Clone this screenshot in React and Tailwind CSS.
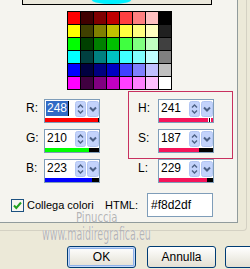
import React from 'react';

const palette = [
  ['#ff0000', '#400000', '#800000', '#c00000', '#ff4040', '#ff8080', '#ffc0c0', '#000000'],
  ['#ffff00', '#404000', '#808000', '#c0c000', '#ffff40', '#ffff80', '#ffffc0', '#202020'],
  ['#00ff00', '#004000', '#008000', '#00c000', '#40ff40', '#80ff80', '#c0ffc0', '#404040'],
  ['#00ffff', '#004040', '#008080', '#00c0c0', '#40ffff', '#80ffff', '#c0ffff', '#808080'],
  ['#0000ff', '#000040', '#000080', '#0000c0', '#4040ff', '#8080ff', '#c0c0ff', '#c0c0c0'],
  ['#ff00ff', '#400040', '#800080', '#c000c0', '#ff40ff', '#ff80ff', '#ffc0ff', '#ffffff'],
];

const SpinButton = () => (
  <svg width="11" height="16" viewBox="0 0 11 16">
    <rect x="0.5" y="0.5" width="10" height="15" rx="2" fill="#c3d3fb" stroke="#b2c5f2" />
    <path d="M3 6.5 L5.5 4 L8 6.5" fill="none" stroke="#4d6185" strokeWidth="1.4" />
    <path d="M3 9.5 L5.5 12 L8 9.5" fill="none" stroke="#4d6185" strokeWidth="1.4" />
  </svg>
);

const DropButton = () => (
  <svg width="12" height="16" viewBox="0 0 12 16">
    <rect x="0.5" y="0.5" width="11" height="15" rx="2" fill="#c3d3fb" stroke="#b2c5f2" />
    <path d="M3 6.5 L6 9.5 L9 6.5" fill="none" stroke="#4d6185" strokeWidth="2" />
  </svg>
);

// campo numerico con spin, tendina e barra colorata sotto
const Field = ({ value, selected, barClass, marker }) => (
  <div className="w-[56px] h-[24px] border border-[#7f9db9] bg-white flex flex-col">
    <div className="flex h-[18px] pt-[1px]">
      <div className="w-[30px] pl-[1px] flex items-start">
        {selected ? (
          <span className="bg-[#316ac5] text-white leading-[15px] h-[15px] px-[1px] border-r border-black">{value}</span>
        ) : (
          <span className="leading-[15px] px-[1px]">{value}</span>
        )}
      </div>
      <SpinButton />
      <div className="w-[1px]" />
      <DropButton />
    </div>
    <div className="h-[4px] flex bg-black">
      {marker ? (
        <>
          <div className={`flex-1 ${barClass}`} />
          <div className="w-[1px] bg-white" />
          <div className="w-[1px] bg-black" />
          <div className="w-[1px] bg-white" />
          <div className={`w-[2px] ${barClass}`} />
        </>
      ) : (
        <div className={barClass} style={{ width: `${(value / 255) * 100}%` }} />
      )}
    </div>
  </div>
);

const Row = ({ label, labelWidth, children }) => (
  <div className="flex items-start">
    <div className={`${labelWidth} h-[18px] flex items-center`}>{label}</div>
    {children}
  </div>
);

const App = () => {
  return (
    <div className="w-[250px] h-[269px] bg-[#ece9d8] overflow-hidden relative text-[12px] text-black font-['Liberation_Sans',Arial,sans-serif]">
      <div className="w-[247px] h-[231px] border-r border-b border-[#d4d1c3] rounded-br-[4px]">
        <div className="w-[238px] h-[223px] bg-[#f5f4ef] border-r border-b border-[#919b9c] flex flex-col">
          {/* Anteprima colore */}
          <div className="ml-[22px] w-[190px] h-[5px] border-x border-b border-black bg-[#ebe8dc] overflow-hidden">
            <div className="ml-[69px] w-[39px] h-[8px] -mt-[4px] rounded-[50%] bg-[#00f0ff] shadow-[0_0_2px_#7ee8f0]" />
          </div>

          {/* Tavolozza */}
          <div className="ml-[67px] mt-[6px] w-fit grid grid-cols-[repeat(8,12px)] auto-rows-[12px] gap-[1px] bg-black p-[1px]">
            {palette.flat().map((c, i) => (
              <div key={i} style={{ backgroundColor: c }} />
            ))}
          </div>

          {/* Campi RGB / HSL */}
          <div className="flex mt-[1px]">
            <div className="w-[128px] pl-[26px] pt-[8px] flex flex-col gap-[6px]">
              <Row label="R:" labelWidth="w-[18px]">
                <Field value={248} selected barClass="bg-[#ff0000]" />
              </Row>
              <Row label="G:" labelWidth="w-[18px]">
                <Field value={210} barClass="bg-[#00ff00]" />
              </Row>
              <Row label="B:" labelWidth="w-[18px]">
                <Field value={223} barClass="bg-[#0000ff]" />
              </Row>
            </div>
            <div className="flex flex-col">
              <div className="w-[105px] border border-[#c8305f] pt-[7px] pb-[5px] pl-[9px] flex flex-col gap-[6px]">
                <Row label="H:" labelWidth="w-[20px]">
                  <Field value={241} marker barClass="bg-[#f5145a]" />
                </Row>
                <Row label="S:" labelWidth="w-[20px]">
                  <Field value={187} barClass="bg-[#f5145a]" />
                </Row>
              </div>
              <div className="pl-[10px]">
                <Row label="L:" labelWidth="w-[20px]">
                  <Field value={229} barClass="bg-[#f5145a]" />
                </Row>
              </div>
            </div>
          </div>

          {/* Collega colori + HTML */}
          <div className="flex items-center h-[24px] mt-[10px] text-[11px]">
            <div className="w-[105px] pl-[11px] flex items-center">
              <svg width="13" height="13" viewBox="0 0 13 13">
                <rect x="0.5" y="0.5" width="12" height="12" fill="#f6f6f2" stroke="#1c5180" />
                <path d="M3 6.5 L5.3 9 L10 3.5" fill="none" stroke="#21a121" strokeWidth="2" />
              </svg>
              <span className="ml-[3px] whitespace-nowrap">Collega colori</span>
            </div>
            <div className="w-[42px]">HTML:</div>
            <div className="w-[66px] h-[24px] border border-[#7f9db9] bg-white flex items-center pl-[3px] text-[12px]">
              #f8d2df
            </div>
          </div>
        </div>
      </div>

      {/* Pulsanti */}
      <div className="flex mt-[15px] pl-[67px] text-[12px]">
        <button className="w-[69px] h-[22px] shrink-0 rounded-[3px] border border-[#003c74] bg-linear-to-b from-white to-[#e3e0d3] shadow-[inset_0_0_0_1px_#c4d8f8,inset_0_0_0_2px_#8fb2ea] flex items-center justify-center">
          OK
        </button>
        <button className="ml-[11px] w-[69px] h-[22px] shrink-0 rounded-[3px] border border-[#003c74] bg-linear-to-b from-white to-[#e3e0d3] flex items-center justify-center">
          Annulla
        </button>
        <button className="ml-[9px] w-[69px] h-[22px] shrink-0 rounded-[3px] border border-[#003c74] bg-linear-to-b from-white to-[#e3e0d3]" />
      </div>

      {/* Filigrana */}
      <div className="absolute left-[76px] top-[210px] text-[14px] leading-none text-[#b4b4b4] [text-shadow:0_0_1px_#ffffff] origin-left scale-x-[0.8] font-['DejaVu_Sans_Condensed','DejaVu_Sans',sans-serif]">
        Pinuccia
      </div>
      <div className="absolute left-[42px] top-[226px] text-[17px] leading-none text-[#b4b4b4] [text-shadow:0_0_1px_#ffffff] origin-left scale-x-[0.62] whitespace-nowrap font-['DejaVu_Sans_Condensed','DejaVu_Sans',sans-serif]">
        www.maidiregrafica.eu
      </div>
    </div>
  );
};

export default App;
